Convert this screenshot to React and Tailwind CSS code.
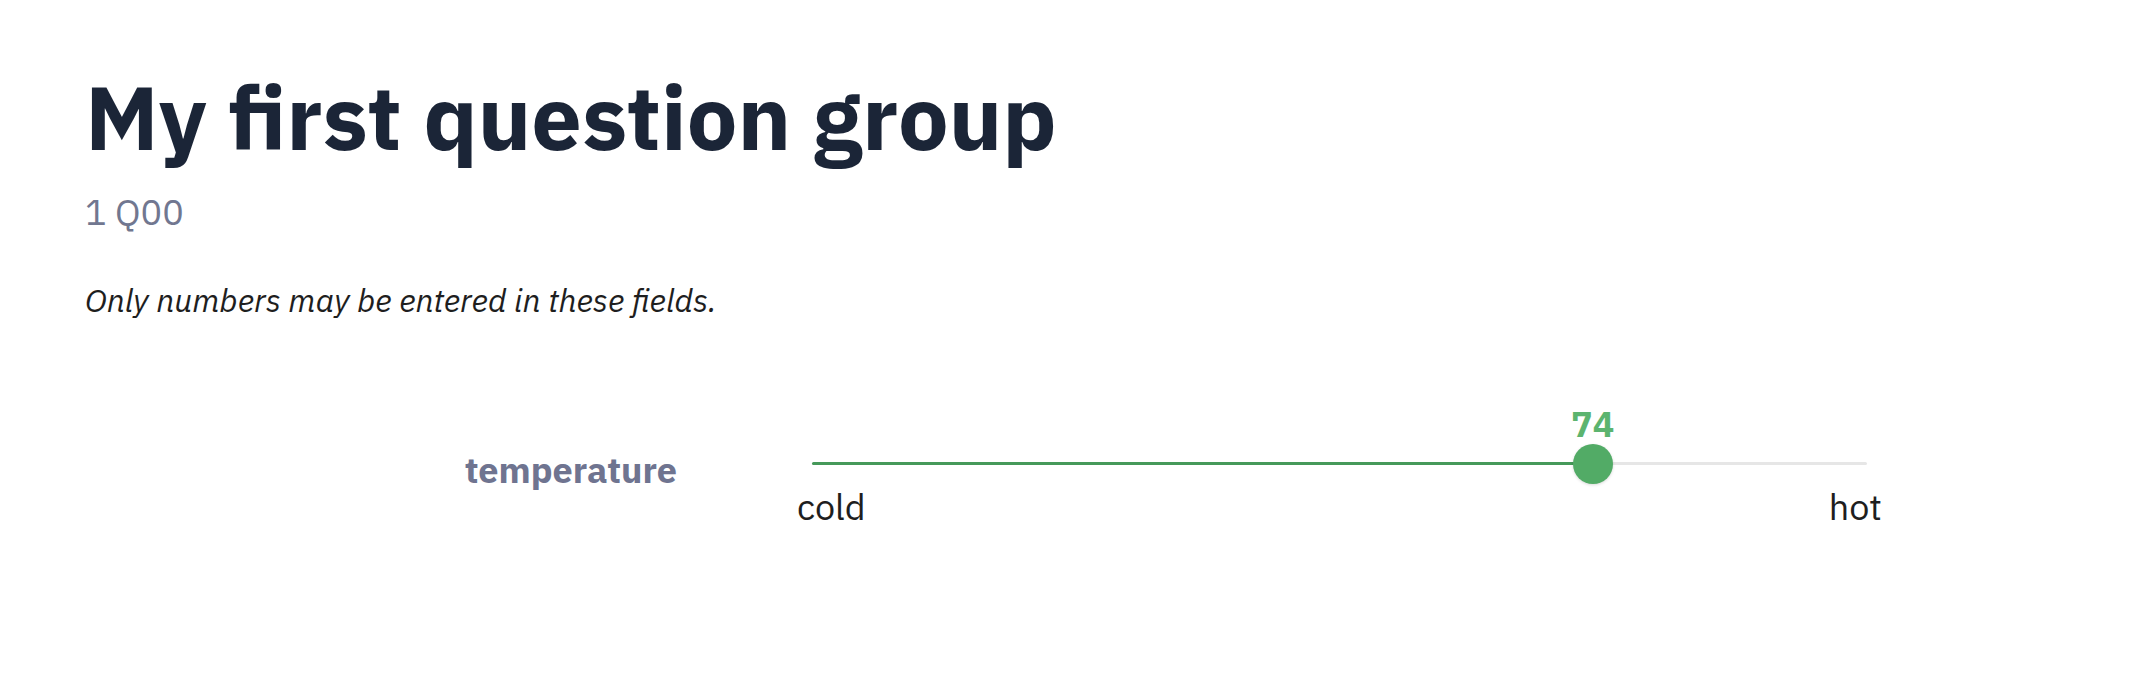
export default function App() {
  const value = 74

  return (
    <div className="min-h-[690px] bg-white pl-[85px] pt-[72px] font-['IBM_Plex_Sans','Noto_Sans',sans-serif]">
      {/* Group header */}
      <h1 className="text-[90px] leading-none font-bold text-[#1b2537]">My first question group</h1>
      <div className="mt-[32px] text-[36px] leading-none text-[#717790]">1 Q00</div>

      <p className="mt-[54px] text-[32px] leading-none italic text-[#1e1e1e]">
        Only numbers may be entered in these fields.
      </p>

      {/* Slider question */}
      <div className="mt-[84px] flex">
        <div className="w-[592px] pt-[52px] text-right text-[36px] leading-none font-bold text-[#6f7490]">
          temperature
        </div>
        <div className="ml-[120px] w-[1085px] pt-[62px]">
          <div className="relative mx-[15px] h-[3px] rounded-full bg-[#e6e6e6]">
            <div className="h-full rounded-full bg-[#46995a]" style={{ width: value + "%" }} />
            <div
              className="absolute bottom-[23px] -translate-x-1/2 text-[36px] leading-none font-bold text-[#5cb46f]"
              style={{ left: value + "%" }}
            >
              {value}
            </div>
            <div
              className="absolute top-1/2 h-10 w-10 -translate-x-1/2 -translate-y-1/2 rounded-full bg-[#52ab66] shadow-[0_1px_3px_rgba(0,0,0,0.15)]"
              style={{ left: value + "%" }}
            />
          </div>
          <div className="mt-[24px] flex justify-between text-[36px] leading-none text-[#1e1e1e]">
            <span>cold</span>
            <span>hot</span>
          </div>
        </div>
      </div>
    </div>
  )
}
